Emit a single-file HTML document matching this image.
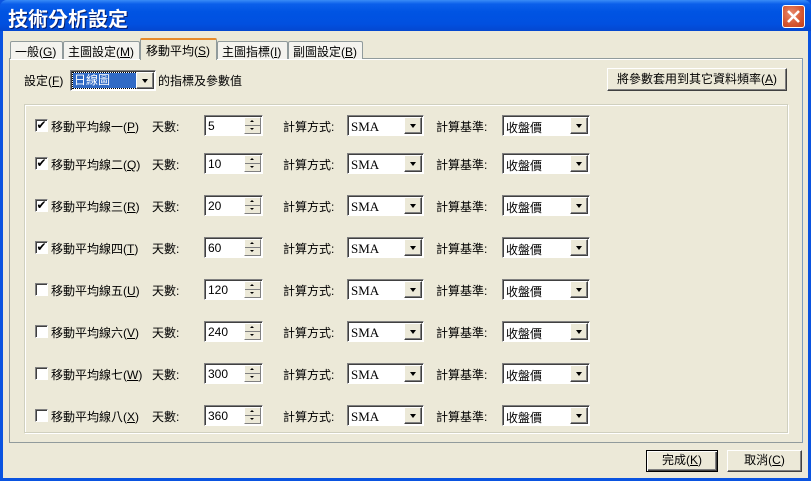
<!DOCTYPE html>
<html><head><meta charset="utf-8"><style>
*{box-sizing:border-box;margin:0;padding:0}
body{width:811px;height:481px;overflow:hidden;background:#0A53E0;font-family:"Liberation Sans","Noto Sans CJK TC",sans-serif;font-size:12px;color:#000;position:relative}
.a{position:absolute}
#title{left:0;top:0;width:811px;height:31px;background:linear-gradient(#3A8CF6 0,#0B5FEA 4px,#0054E3 12px,#0150E0 24px,#0447CF 31px);border-radius:7px 7px 0 0}
#title span{position:absolute;left:8px;top:3px;color:#fff;font-size:20px;font-weight:bold;text-shadow:1px 1px 0 #0A1F6A;letter-spacing:0px}
#close{left:782px;top:5px;width:23px;height:23px;background:radial-gradient(circle at 40% 35%,#E88A6E,#D5552F 60%,#C2401E);border:1px solid #fff;border-radius:3px}
#body{left:3px;top:31px;width:805px;height:447px;background:#ECE9D8}
.tab{position:absolute;top:41px;height:18px;border:1px solid #919B9C;border-bottom:none;background:#F4F3EE;border-radius:2px 2px 0 0;padding:1px 0 0 4px;white-space:nowrap}
#panel{left:9px;top:58px;width:794px;height:385px;border:1px solid #919B9C;border-right-color:#7F9DB9;background:#F4F3EE;box-shadow:inset -1px -1px 0 #ACA899}
#panel2{left:10px;top:59px;width:792px;height:383px;background:#ECE9D8;border-top:1px solid #fff}
.grp{left:24px;top:104px;width:764px;height:329px;border:1px solid #D0D0BF;box-shadow:1px 1px 0 #fff inset,1px 1px 0 #fff}
.cb{position:absolute;width:13px;height:13px;border:1px solid #1C5180;background:#fff;border-color:#808080 #fff #fff #808080;box-shadow:inset 1px 1px 0 #404040;font-size:12px;line-height:11px;text-align:center}
.ed{position:absolute;height:21px;background:#fff;border:1px solid;border-color:#808080 #fff #fff #808080;box-shadow:inset 1px 1px 0 #404040}
.ed span{position:absolute;left:3px;top:3px}
.sm{font-family:"Liberation Serif",serif;font-size:13px}
.dd{position:absolute;right:1px;top:1px;width:18px;height:17px;background:#ECE9D8;border:1px solid;border-color:#fff #404040 #404040 #fff;box-shadow:inset -1px -1px 0 #808080}
.dd:after{content:"";position:absolute;left:5px;top:6px;border:3.5px solid transparent;border-top:4px solid #000;border-bottom:none}
.sp{position:absolute;right:1px;top:1px;width:17px;height:17px;background:#ECE9D8;border:1px solid;border-color:#fff #808080 #808080 #fff}
.sp:before{content:"";position:absolute;left:5px;top:2px;border:2px solid transparent;border-bottom:2px solid #000;border-top:none}
.sp:after{content:"";position:absolute;left:5px;top:10px;border:2px solid transparent;border-top:2px solid #000;border-bottom:none}
.sp i{position:absolute;left:0;top:7px;width:15px;height:1px;background:#808080}
.btn{position:absolute;height:22px;background:#ECE9D8;border:1px solid;border-color:#fff #404040 #404040 #fff;box-shadow:inset -1px -1px 0 #808080;text-align:center;line-height:19px}
.t{position:absolute;white-space:nowrap}
</style></head><body>
<div id="title" class="a"><span>技術分析設定</span></div>
<div id="close" class="a"><svg width="21" height="21" style="position:absolute;left:0;top:0"><path d="M5 5L16 16M16 5L5 16" stroke="#fff" stroke-width="2.6"/></svg></div>
<div id="body" class="a"></div>
<div id="panel" class="a"></div>
<div id="panel2" class="a"></div>
<div class="tab" style="left:10px;width:53px">一般(<u>G</u>)</div>
<div class="tab" style="left:63px;width:77px">主圖設定(<u>M</u>)</div>
<div class="tab" style="left:217px;width:71px">主圖指標(<u>I</u>)</div>
<div class="tab" style="left:288px;width:75px">副圖設定(<u>B</u>)</div>
<div class="tab" style="left:140px;top:38px;height:22px;width:77px;background:#ECE9D8;border-top:2px solid #E68B2C;padding:2px 0 0 5px">移動平均(<u>S</u>)</div>
<div class="t" style="left:24px;top:72px">設定(<u>F</u>)</div>
<div class="ed" style="left:70px;top:70px;width:86px"><span style="left:2px;top:2px;height:15px;width:64px;background:#316AC5;color:#fff;padding-left:1px;line-height:14px;outline:1px dotted #000">日線圖</span><div class="dd"></div></div>
<div class="t" style="left:158px;top:72px">的指標及參數值</div>
<div class="btn" style="left:607px;top:68px;width:180px;height:23px;line-height:20px">將參數套用到其它資料頻率(<u>A</u>)</div>
<div class="grp a"></div>

<div class="cb" style="left:35px;top:119px">✔</div><div class="t" style="left:51px;top:118px">移動平均線一(<u>P</u>)</div><div class="t" style="left:152px;top:118px">天數:</div><div class="ed" style="left:204px;top:115px;width:59px"><span>5</span><div class="sp"><i></i></div></div><div class="t" style="left:283px;top:118px">計算方式:</div><div class="ed" style="left:347px;top:115px;width:77px"><span class="sm">SMA</span><div class="dd"></div></div><div class="t" style="left:436px;top:118px">計算基準:</div><div class="ed" style="left:502px;top:115px;width:88px"><span>收盤價</span><div class="dd"></div></div>

<div class="cb" style="left:35px;top:157px">✔</div><div class="t" style="left:51px;top:156px">移動平均線二(<u>Q</u>)</div><div class="t" style="left:152px;top:156px">天數:</div><div class="ed" style="left:204px;top:153px;width:59px"><span>10</span><div class="sp"><i></i></div></div><div class="t" style="left:283px;top:156px">計算方式:</div><div class="ed" style="left:347px;top:153px;width:77px"><span class="sm">SMA</span><div class="dd"></div></div><div class="t" style="left:436px;top:156px">計算基準:</div><div class="ed" style="left:502px;top:153px;width:88px"><span>收盤價</span><div class="dd"></div></div>

<div class="cb" style="left:35px;top:199px">✔</div><div class="t" style="left:51px;top:198px">移動平均線三(<u>R</u>)</div><div class="t" style="left:152px;top:198px">天數:</div><div class="ed" style="left:204px;top:195px;width:59px"><span>20</span><div class="sp"><i></i></div></div><div class="t" style="left:283px;top:198px">計算方式:</div><div class="ed" style="left:347px;top:195px;width:77px"><span class="sm">SMA</span><div class="dd"></div></div><div class="t" style="left:436px;top:198px">計算基準:</div><div class="ed" style="left:502px;top:195px;width:88px"><span>收盤價</span><div class="dd"></div></div>

<div class="cb" style="left:35px;top:241px">✔</div><div class="t" style="left:51px;top:240px">移動平均線四(<u>T</u>)</div><div class="t" style="left:152px;top:240px">天數:</div><div class="ed" style="left:204px;top:237px;width:59px"><span>60</span><div class="sp"><i></i></div></div><div class="t" style="left:283px;top:240px">計算方式:</div><div class="ed" style="left:347px;top:237px;width:77px"><span class="sm">SMA</span><div class="dd"></div></div><div class="t" style="left:436px;top:240px">計算基準:</div><div class="ed" style="left:502px;top:237px;width:88px"><span>收盤價</span><div class="dd"></div></div>

<div class="cb" style="left:35px;top:283px"></div><div class="t" style="left:51px;top:282px">移動平均線五(<u>U</u>)</div><div class="t" style="left:152px;top:282px">天數:</div><div class="ed" style="left:204px;top:279px;width:59px"><span>120</span><div class="sp"><i></i></div></div><div class="t" style="left:283px;top:282px">計算方式:</div><div class="ed" style="left:347px;top:279px;width:77px"><span class="sm">SMA</span><div class="dd"></div></div><div class="t" style="left:436px;top:282px">計算基準:</div><div class="ed" style="left:502px;top:279px;width:88px"><span>收盤價</span><div class="dd"></div></div>

<div class="cb" style="left:35px;top:325px"></div><div class="t" style="left:51px;top:324px">移動平均線六(<u>V</u>)</div><div class="t" style="left:152px;top:324px">天數:</div><div class="ed" style="left:204px;top:321px;width:59px"><span>240</span><div class="sp"><i></i></div></div><div class="t" style="left:283px;top:324px">計算方式:</div><div class="ed" style="left:347px;top:321px;width:77px"><span class="sm">SMA</span><div class="dd"></div></div><div class="t" style="left:436px;top:324px">計算基準:</div><div class="ed" style="left:502px;top:321px;width:88px"><span>收盤價</span><div class="dd"></div></div>

<div class="cb" style="left:35px;top:367px"></div><div class="t" style="left:51px;top:366px">移動平均線七(<u>W</u>)</div><div class="t" style="left:152px;top:366px">天數:</div><div class="ed" style="left:204px;top:363px;width:59px"><span>300</span><div class="sp"><i></i></div></div><div class="t" style="left:283px;top:366px">計算方式:</div><div class="ed" style="left:347px;top:363px;width:77px"><span class="sm">SMA</span><div class="dd"></div></div><div class="t" style="left:436px;top:366px">計算基準:</div><div class="ed" style="left:502px;top:363px;width:88px"><span>收盤價</span><div class="dd"></div></div>

<div class="cb" style="left:35px;top:409px"></div><div class="t" style="left:51px;top:408px">移動平均線八(<u>X</u>)</div><div class="t" style="left:152px;top:408px">天數:</div><div class="ed" style="left:204px;top:405px;width:59px"><span>360</span><div class="sp"><i></i></div></div><div class="t" style="left:283px;top:408px">計算方式:</div><div class="ed" style="left:347px;top:405px;width:77px"><span class="sm">SMA</span><div class="dd"></div></div><div class="t" style="left:436px;top:408px">計算基準:</div><div class="ed" style="left:502px;top:405px;width:88px"><span>收盤價</span><div class="dd"></div></div>

<div class="btn" style="left:646px;top:450px;width:72px;border:1px solid #000;box-shadow:inset 1px 1px 0 #fff,inset -1px -1px 0 #404040,inset -2px -2px 0 #808080">完成(<u>K</u>)</div>
<div class="btn" style="left:727px;top:450px;width:75px">取消(<u>C</u>)</div>
</body></html>
